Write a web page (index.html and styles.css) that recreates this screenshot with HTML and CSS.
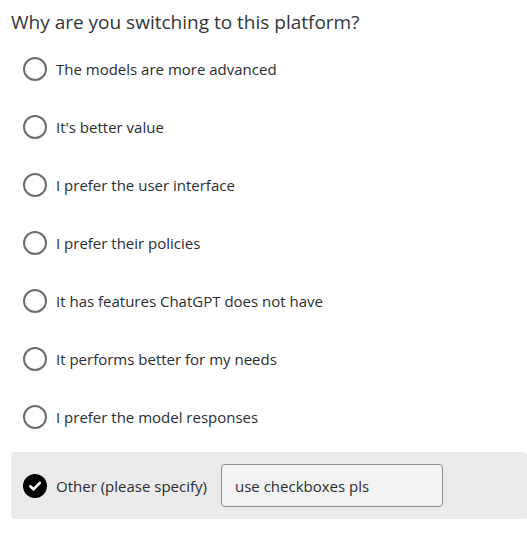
FILE: index.html
```html
<!DOCTYPE html>
<html>
<head>
<meta charset="utf-8">
<link rel="stylesheet" href="styles.css">
</head>
<body>
<div class="survey">
  <h1 class="question">Why are you switching to this platform?</h1>
  <ul class="options">
    <li class="option"><span class="radio"></span><span class="label">The models are more advanced</span></li>
    <li class="option"><span class="radio"></span><span class="label">It's better value</span></li>
    <li class="option"><span class="radio"></span><span class="label">I prefer the user interface</span></li>
    <li class="option"><span class="radio"></span><span class="label">I prefer their policies</span></li>
    <li class="option"><span class="radio"></span><span class="label">It has features ChatGPT does not have</span></li>
    <li class="option"><span class="radio"></span><span class="label">It performs better for my needs</span></li>
    <li class="option"><span class="radio"></span><span class="label">I prefer the model responses</span></li>
    <li class="option selected">
      <span class="radio checked">
        <svg width="24" height="24" viewBox="0 0 24 24"><circle cx="12" cy="12" r="12" fill="#000"/><path d="M7.3 12.3 L10.5 15.3 L16.8 8.8" fill="none" stroke="#fff" stroke-width="2.6" stroke-linecap="round" stroke-linejoin="round"/></svg>
      </span>
      <span class="label">Other (please specify)</span>
      <span class="other-input">use checkboxes pls</span>
    </li>
  </ul>
</div>
</body>
</html>
```
FILE: styles.css
```css
html, body {
  margin: 0;
  padding: 0;
  background: #fff;
}
body {
  font-family: "Open Sans", "Noto Sans", sans-serif;
  color: #32363a;
}
.survey {
  padding: 8px 0 0 11px;
}
.question {
  margin: 0;
  font-size: 19px;
  font-weight: 400;
  line-height: 28px;
  color: #32363a;
}
.options {
  list-style: none;
  margin: 10px 0 0 0;
  padding: 0;
}
.option {
  display: flex;
  align-items: center;
  height: 46px;
  margin-bottom: 12px;
  padding-left: 12px;
  border-radius: 4px;
}
.radio {
  width: 24px;
  height: 24px;
  box-sizing: border-box;
  border: 2px solid #6a6d70;
  border-radius: 50%;
  flex: none;
}
.radio.checked {
  border: none;
}
.radio svg {
  display: block;
}
.label {
  margin-left: 9px;
  font-size: 15px;
  color: #2a2e32;
}
.option.selected {
  background: #ebebeb;
  height: 67px;
  margin-top: 12px;
}
.other-input {
  margin-left: 14px;
  width: 222px;
  height: 43px;
  box-sizing: border-box;
  border: 1px solid #89919a;
  border-radius: 4px;
  background: #f3f3f3;
  font-size: 15px;
  padding-left: 13px;
  display: flex;
  align-items: center;
  color: #2a2e32;
}
```
